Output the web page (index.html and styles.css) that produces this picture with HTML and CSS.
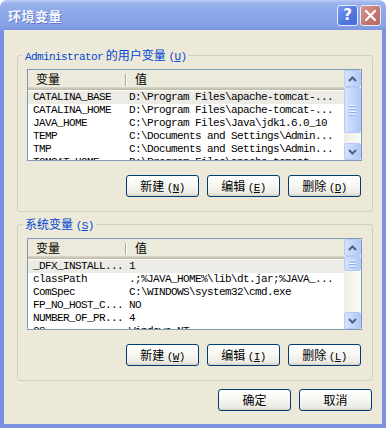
FILE: index.html
```html
<!DOCTYPE html>
<html lang="zh-CN">
<head>
  <meta charset="UTF-8" />
  <title>环境变量</title>
  <link rel="stylesheet" href="styles.css">
</head>
<body>

  <!-- Dialog window -->
  <div class="window">
    <div class="titlebar">
      <span class="title">环境变量</span>
      <div class="caption-btns">
        <span class="cap help">?</span>
        <span class="cap close">
          <svg width="13" height="13" viewBox="0 0 13 13"><path d="M2 2 L11 11 M11 2 L2 11" stroke="#fff" stroke-width="2.2" stroke-linecap="round"/></svg>
        </span>
      </div>
    </div>

    <div class="client">

      <!-- User variables -->
      <fieldset class="group">
        <legend><span class="mono">Administrator</span> 的用户变量 <span class="mono">(<u>U</u>)</span></legend>
        <div class="list">
          <div class="list-body">
            <div class="list-head">
              <div class="hcol">变量</div>
              <div class="hcol">值</div>
            </div>
            <div class="row sel"><span class="c1">CATALINA_BASE</span><span class="c2">D:\Program Files\apache-tomcat-...</span></div>
            <div class="row"><span class="c1">CATALINA_HOME</span><span class="c2">D:\Program Files\apache-tomcat-...</span></div>
            <div class="row"><span class="c1">JAVA_HOME</span><span class="c2">C:\Program Files\Java\jdk1.6.0_10</span></div>
            <div class="row"><span class="c1">TEMP</span><span class="c2">C:\Documents and Settings\Admin...</span></div>
            <div class="row"><span class="c1">TMP</span><span class="c2">C:\Documents and Settings\Admin...</span></div>
            <div class="row"><span class="c1">TOMCAT_HOME</span><span class="c2">D:\Program Files\apache-tomcat-...</span></div>
          </div>
          <div class="scrollbar">
            <span class="sb-btn"><svg width="9" height="6" viewBox="0 0 9 6"><path d="M1 5 L4.5 1.5 L8 5" fill="none" stroke="#4d6185" stroke-width="2"/></svg></span>
            <div class="sb-track">
              <span class="sb-thumb tall"><i></i><i></i><i></i><i></i></span>
            </div>
            <span class="sb-btn"><svg width="9" height="6" viewBox="0 0 9 6"><path d="M1 1 L4.5 4.5 L8 1" fill="none" stroke="#4d6185" stroke-width="2"/></svg></span>
          </div>
        </div>
        <div class="btn-row">
          <button class="btn">新建 <span class="mono">(<u>N</u>)</span></button>
          <button class="btn">编辑 <span class="mono">(<u>E</u>)</span></button>
          <button class="btn">删除 <span class="mono">(<u>D</u>)</span></button>
        </div>
      </fieldset>

      <!-- System variables -->
      <fieldset class="group">
        <legend>系统变量 <span class="mono">(<u>S</u>)</span></legend>
        <div class="list">
          <div class="list-body">
            <div class="list-head">
              <div class="hcol">变量</div>
              <div class="hcol">值</div>
            </div>
            <div class="row sel"><span class="c1">_DFX_INSTALL...</span><span class="c2">1</span></div>
            <div class="row"><span class="c1">classPath</span><span class="c2">.;%JAVA_HOME%\lib\dt.jar;%JAVA_...</span></div>
            <div class="row"><span class="c1">ComSpec</span><span class="c2">C:\WINDOWS\system32\cmd.exe</span></div>
            <div class="row"><span class="c1">FP_NO_HOST_C...</span><span class="c2">NO</span></div>
            <div class="row"><span class="c1">NUMBER_OF_PR...</span><span class="c2">4</span></div>
            <div class="row"><span class="c1">OS</span><span class="c2">Windows_NT</span></div>
          </div>
          <div class="scrollbar">
            <span class="sb-btn"><svg width="9" height="6" viewBox="0 0 9 6"><path d="M1 5 L4.5 1.5 L8 5" fill="none" stroke="#4d6185" stroke-width="2"/></svg></span>
            <div class="sb-track">
              <span class="sb-thumb short"><i></i><i></i><i></i><i></i></span>
            </div>
            <span class="sb-btn"><svg width="9" height="6" viewBox="0 0 9 6"><path d="M1 1 L4.5 4.5 L8 1" fill="none" stroke="#4d6185" stroke-width="2"/></svg></span>
          </div>
        </div>
        <div class="btn-row">
          <button class="btn">新建 <span class="mono">(<u>W</u>)</span></button>
          <button class="btn">编辑 <span class="mono">(<u>I</u>)</span></button>
          <button class="btn">删除 <span class="mono">(<u>L</u>)</span></button>
        </div>
      </fieldset>

      <!-- Dialog buttons -->
      <div class="btn-row dialog-btns">
        <button class="btn">确定</button>
        <button class="btn">取消</button>
      </div>

    </div>
  </div>

</body>
</html>
```

FILE: styles.css
```css
/* Global */
body {
  margin: 0;
  width: 388px;
  height: 428px;
  overflow: hidden;
  background: #fff;
  font-family: "Noto Sans CJK SC", sans-serif;
  font-size: 12px;
  color: #000;
}
.mono {
  font-family: "Liberation Mono", "Noto Sans CJK SC", monospace;
  font-size: 11px;
  letter-spacing: -0.6px;
  line-height: 1;
}
u {
  text-decoration: underline;
  text-underline-offset: 1px;
}
/* Window frame */
.window {
  width: 386px;
  height: 428px;
  display: flex;
  flex-direction: column;
}
.titlebar {
  height: 30px;
  flex: none;
  display: flex;
  align-items: center;
  justify-content: space-between;
  padding: 0 5px 0 8px;
  border-radius: 7px 7px 0 0;
  background: linear-gradient(to bottom, #b9cbf3 0%, #98b1ec 12%, #8da8ea 45%, #87a1e6 85%, #7c96df 100%);
}
.title {
  color: #f4f7fd;
  font-weight: bold;
  font-size: 13px;
  text-shadow: 1px 1px 0 #6478c8;
  letter-spacing: 0.5px;
}
.caption-btns {
  display: flex;
  gap: 2px;
}
.cap {
  width: 19px;
  height: 19px;
  border: 1px solid #e6ebfa;
  border-radius: 3px;
  display: flex;
  align-items: center;
  justify-content: center;
  color: #fff;
  font-family: "DejaVu Sans", sans-serif;
  font-weight: bold;
  font-size: 15px;
}
.cap.help {
  background: linear-gradient(135deg, #7a9cf0, #4e74df 60%, #4a6bd6);
}
.cap.close {
  background: linear-gradient(135deg, #d99a94, #c2756f 60%, #b8665f);
}
.client {
  flex: 1;
  background: #ece9d8;
  border: 4px solid #7b90e0;
  border-top: 0;
  padding: 18px 9px 0 13px;
}
/* Group boxes */
.group {
  margin: 0 0 5px 0;
  padding: 7px 10px 14px 9px;
  border: 1px solid #d0d0bf;
  border-radius: 3px;
}
.group legend {
  margin-left: -4px;
  padding: 0 2px;
  height: 14px;
  line-height: 14px;
  color: #0046d5;
  font-size: 12px;
}
/* List views */
.list {
  height: 90px;
  border: 1px solid #7f9db9;
  background: #fff;
  display: flex;
}
.list-body {
  flex: 1;
  overflow: hidden;
}
.list-head {
  height: 17px;
  display: grid;
  grid-template-columns: 99px 1fr;
  background: #ebeadb;
  border-bottom: 1px solid #d6d2c2;
  box-shadow: 0 1px 0 #cbc7b8, 0 2px 0 #c1bca9;
  margin-bottom: 3px;
  line-height: 17px;
}
.hcol {
  padding-left: 8px;
  position: relative;
}
.hcol:first-child::after {
  content: "";
  position: absolute;
  right: 0;
  top: 4px;
  height: 12px;
  border-left: 1px solid #aca899;
  border-right: 1px solid #fff;
}
.row {
  height: 13px;
  display: grid;
  grid-template-columns: 99px 1fr;
  line-height: 13px;
  font-family: "Liberation Mono", monospace;
  font-size: 11px;
  letter-spacing: -0.6px;
  white-space: nowrap;
}
.row.sel {
  background: #ecebe6;
}
.c1 {
  padding-left: 5px;
  overflow: hidden;
}
.c2 {
  padding-left: 2px;
}
/* Scrollbar */
.scrollbar {
  width: 17px;
  display: flex;
  flex-direction: column;
  background: linear-gradient(to right, #eeede5, #fbfbf8);
}
.sb-btn,
.sb-thumb {
  box-sizing: border-box;
  border: 1px solid #b7caf5;
  border-radius: 2px;
  background: linear-gradient(to right, #d6e2fd, #c1d3fb 60%, #b4c8f6);
}
.sb-btn {
  height: 17px;
  display: flex;
  align-items: center;
  justify-content: center;
  flex: none;
}
.sb-track {
  flex: 1;
  display: flex;
  flex-direction: column;
}
.sb-thumb {
  display: flex;
  flex-direction: column;
  align-items: center;
  justify-content: center;
  gap: 1px;
}
.sb-thumb.tall { height: 46px; }
.sb-thumb.short { height: 15px; }
.sb-thumb i {
  width: 7px;
  height: 1px;
  background: #eef4fe;
  border-bottom: 1px solid #8cb0f8;
}
.sb-thumb.short i:nth-child(n+4) { display: none; }
/* Buttons */
.btn-row {
  display: flex;
  justify-content: flex-end;
  gap: 8px;
  margin-top: 14px;
  padding-right: 1px;
}
.btn {
  width: 73px;
  height: 22px;
  padding: 0;
  border: 1px solid #003c74;
  border-radius: 3px;
  background: linear-gradient(to bottom, #ffffff 0%, #f6f6f2 50%, #ecebe4 85%, #d8d2c4 100%);
  font-family: "Noto Sans CJK SC", sans-serif;
  font-size: 12px;
  color: #000;
  line-height: 18px;
}
.dialog-btns {
  margin-top: 8px;
}
```
